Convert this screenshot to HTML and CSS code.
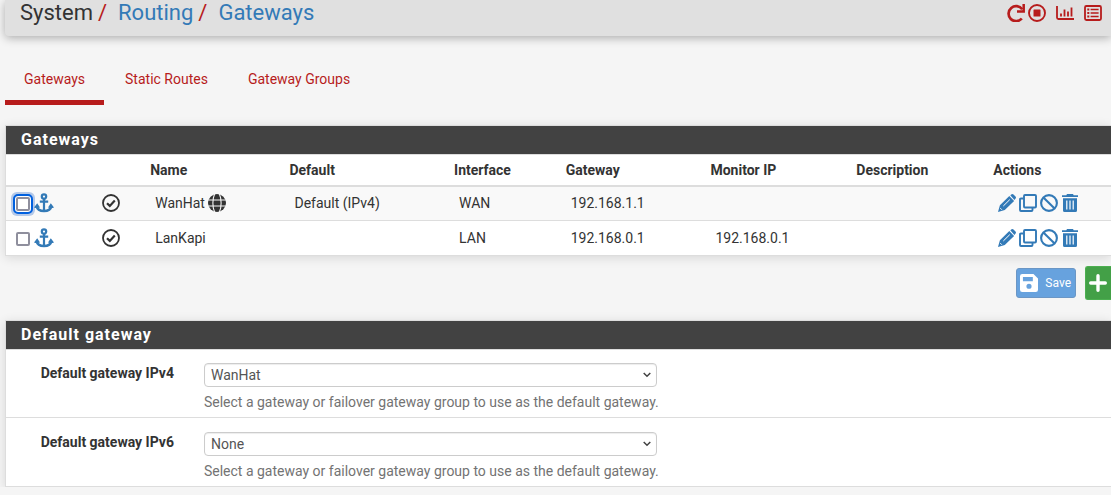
FILE: index.html
```html
<!DOCTYPE html>
<html lang="en">
<head>
<meta charset="utf-8">
<title>System / Routing / Gateways</title>
<link rel="stylesheet" href="styles.css">
</head>
<body>
<svg class="sprite" aria-hidden="true">
  <symbol id="anchor" viewBox="0 0 20 20"><g fill="none" stroke="currentColor" stroke-width="2.2"><circle cx="10" cy="3.6" r="2.2"/><path d="M10 6v12M5.8 8.6h8.4"/><path d="M2.6 13c.6 3.4 3.6 5 7.4 5s6.800-1.600 7.400-5" stroke-width="2.500"/></g><path fill="currentColor" d="M0 14.400 3.200 10.200 6 14.400 3.800 15 1.500 14.900zM20 14.400l-3.200-4.200-2.800 4.200 2.200.6 2.300-.1z"/></symbol>
  <symbol id="check" viewBox="0 0 18 18"><g fill="none" stroke="currentColor"><circle cx="9" cy="9" r="8" stroke-width="1.800"/><path d="m5 9.200 2.800 2.700 5-5.400" stroke-width="2.200"/></g></symbol>
  <symbol id="globe" viewBox="0 0 18 18"><circle cx="9" cy="9" r="9" fill="currentColor"/><g fill="none" stroke="#f9f9f9" stroke-width="1.100"><path d="M0 6h18M0 12h18M6.600 0C4.300 5 4.300 13 6.600 18M11.400 0c2.300 5 2.300 13 0 18"/></g></symbol>
  <symbol id="pencil" viewBox="0 0 18 18"><path fill="currentColor" d="M12.300 1.200 13.600.3q1-.6 1.900.2l2 2q.9.9.1 2l-1.200 1.500zM11.300 2.100l4.800 4.800-9.300 9.200L0 18l1.900-6.700z"/><path d="m5.300 12 6.500-6.400M2.300 14.200l1.500 1.500" fill="none" stroke="#fff" stroke-width="1"/></symbol>
  <symbol id="copy" viewBox="0 0 18 18"><g fill="none" stroke="currentColor" stroke-width="1.900"><rect x="5" y="1" width="12" height="12.500" rx="1"/><path d="M4.500 4.500H2q-1 0-1 1V16q0 1 1 1h10.500q1 0 1-1v-2"/></g></symbol>
  <symbol id="ban" viewBox="0 0 18 18"><g fill="none" stroke="currentColor" stroke-width="2.100"><circle cx="9" cy="9" r="7.900"/><path d="m3.400 3.400 11.200 11.200"/></g></symbol>
  <symbol id="trash" viewBox="0 0 16 18"><path fill="currentColor" d="M5 0h6l.7 1.200H16v1.900H0V1.200h4.300zM1 4.200h14V16.500Q15 18 13.500 18h-11Q1 18 1 16.500z"/><path d="M4.800 6.400v9.200M8 6.400v9.200M11.200 6.400v9.200" stroke="#fff" stroke-width="1.200"/></symbol>
  <symbol id="redo" viewBox="0 0 18 18"><path d="M15.200 5.300A7.500 7.500 0 1 0 14.800 14.500" fill="none" stroke="currentColor" stroke-width="2.700"/><path d="M16.700 0v7.400H10" fill="none" stroke="currentColor" stroke-width="2.500"/></symbol>
  <symbol id="stop" viewBox="0 0 18 18"><circle cx="9" cy="9" r="8" fill="none" stroke="currentColor" stroke-width="1.900"/><rect x="5.500" y="5.500" width="7" height="7" rx=".6" fill="currentColor"/></symbol>
  <symbol id="chart" viewBox="0 0 18 14"><path d="M1 0v11.500Q1 13 2.500 13H18M5 10.500V7.500M8.500 10.500v-7M12 10.500v-5M15.500 10.500v-9" fill="none" stroke="currentColor" stroke-width="1.800"/></symbol>
  <symbol id="list" viewBox="0 0 18 16"><g fill="none" stroke="currentColor"><rect x="1" y="1" width="16" height="14" rx="1.400" stroke-width="1.800"/><path d="M3.300 4.500h2M3.300 8h2M3.300 11.500h2" stroke-width="2"/><path d="M6.600 4.500h8M6.600 8h8M6.600 11.500h8" stroke-width="1.500"/></g></symbol>
  <symbol id="save" viewBox="0 0 16 16"><path fill="currentColor" fill-rule="evenodd" d="M2 0h10l4 4v10q0 2-2 2H2q-2 0-2-2V2q0-2 2-2zm.6 2.600v3.800h8.800V2.600zM8 8.600a2.300 2.300 0 1 0 0 4.600 2.300 2.300 0 0 0 0-4.600z"/></symbol>
  <symbol id="plus" viewBox="0 0 16 16"><path d="M8 1.500v13M1.500 8h13" stroke="currentColor" stroke-width="3" stroke-linecap="round"/></symbol>
</svg>

<header class="page-header">
  <nav class="breadcrumb" aria-label="Breadcrumb"><span>System</span><span class="slash">/</span><a href="#routing">Routing</a><span class="slash">/</span><a href="#gateways">Gateways</a></nav>
  <div class="header-tools">
    <a href="#restart" aria-label="Restart service"><svg class="icon"><use href="#redo"/></svg></a>
    <a href="#stop-service" aria-label="Stop service"><svg class="icon"><use href="#stop"/></svg></a>
    <a class="spaced" href="#status" aria-label="Status"><svg class="icon"><use href="#chart"/></svg></a>
    <a class="spaced" href="#log" aria-label="Log"><svg class="icon"><use href="#list"/></svg></a>
  </div>
</header>

<main class="content">
  <nav class="tabs">
    <a class="tab active" href="#gateways" aria-current="page">Gateways</a>
    <a class="tab" href="#static-routes">Static Routes</a>
    <a class="tab" href="#groups">Gateway Groups</a>
  </nav>

  <section class="panel">
    <h2 class="panel-title">Gateways</h2>
    <table class="gateways">
      <colgroup><col class="c-select"><col class="c-state"><col class="c-name"><col class="c-default"><col class="c-interface"><col class="c-gateway"><col class="c-monitor"><col class="c-description"><col></colgroup>
      <thead>
        <tr><th></th><th></th><th>Name</th><th>Default</th><th>Interface</th><th>Gateway</th><th>Monitor IP</th><th>Description</th><th>Actions</th></tr>
      </thead>
      <tbody>
        <tr>
          <td><div class="icons select"><input class="tick focused" type="checkbox" aria-label="Select WanHat"><a href="#move" aria-label="Move WanHat"><svg class="icon anchor"><use href="#anchor"/></svg></a></div></td>
          <td><svg class="icon"><use href="#check"/></svg></td>
          <td><div class="name">WanHat <svg class="icon"><use href="#globe"/></svg></div></td>
          <td>Default (IPv4)</td><td>WAN</td><td>192.168.1.1</td><td></td><td></td>
          <td><div class="icons"><a href="#edit" aria-label="Edit"><svg class="icon"><use href="#pencil"/></svg></a><a href="#copy-row" aria-label="Copy"><svg class="icon"><use href="#copy"/></svg></a><a href="#disable" aria-label="Disable"><svg class="icon"><use href="#ban"/></svg></a><a href="#delete" aria-label="Delete"><svg class="icon"><use href="#trash"/></svg></a></div></td>
        </tr>
        <tr>
          <td><div class="icons select"><input class="tick" type="checkbox" aria-label="Select LanKapi"><a href="#move" aria-label="Move LanKapi"><svg class="icon anchor"><use href="#anchor"/></svg></a></div></td>
          <td><svg class="icon"><use href="#check"/></svg></td>
          <td>LanKapi</td><td></td><td>LAN</td><td>192.168.0.1</td><td>192.168.0.1</td><td></td>
          <td><div class="icons"><a href="#edit" aria-label="Edit"><svg class="icon"><use href="#pencil"/></svg></a><a href="#copy-row" aria-label="Copy"><svg class="icon"><use href="#copy"/></svg></a><a href="#disable" aria-label="Disable"><svg class="icon"><use href="#ban"/></svg></a><a href="#delete" aria-label="Delete"><svg class="icon"><use href="#trash"/></svg></a></div></td>
        </tr>
      </tbody>
    </table>
  </section>

  <div class="buttons">
    <button class="btn save" type="button"><svg class="icon"><use href="#save"/></svg>Save</button>
    <button class="btn add" type="button" aria-label="Add"><svg class="icon"><use href="#plus"/></svg></button>
  </div>

  <section class="panel">
    <h2 class="panel-title">Default gateway</h2>
    <div class="field">
      <label for="gw4">Default gateway IPv4</label>
      <div><select id="gw4"><option>WanHat</option><option>LanKapi</option></select><p class="help">Select a gateway or failover gateway group to use as the default gateway.</p></div>
    </div>
    <div class="field">
      <label for="gw6">Default gateway IPv6</label>
      <div><select id="gw6"><option>None</option></select><p class="help">Select a gateway or failover gateway group to use as the default gateway.</p></div>
    </div>
  </section>
</main>
</body>
</html>
```
FILE: styles.css
```css
* { box-sizing: border-box; }
body {
  margin: 0;
  background: #f5f5f5;
  color: #333;
  font: 14px/20px Roboto, sans-serif;
  overflow-x: hidden;
}
a { color: #337ab7; text-decoration: none; }
.sprite { display: none; }
.icon { display: block; width: 18px; height: 18px; }

.page-header {
  display: flex;
  justify-content: space-between;
  align-items: flex-start;
  margin-left: 5px;
  padding: 0 9px 10px 15px;
  border-radius: 0 0 0 4px;
  background: #e0e0e0;
  box-shadow: 0 2px 10px rgba(0, 0, 0, .3);
}
.breadcrumb { display: flex; font-size: 22px; line-height: 26px; }
.slash { margin: 0 11px 0 5px; color: #b71c1c; }
.header-tools { display: flex; gap: 3px; padding-top: 4px; }
.header-tools a { color: #b71c1c; }
.header-tools .spaced { margin-left: 7px; }

.content { padding-left: 5px; }
.tabs { display: flex; gap: 2px; padding-top: 24px; }
.tab {
  padding: 9px 19px 11px;
  border-bottom: 5px solid transparent;
  color: #b71c1c;
}
.tab.active { border-color: #b71c1c; }

.panel {
  border: 1px solid #ddd;
  border-right: 0;
  background: #fff;
  box-shadow: 0 2px 10px rgba(0, 0, 0, .12);
}
.tabs + .panel { margin-top: 20px; }
.panel-title {
  margin: 0;
  padding: 4px 15px;
  border-bottom: 1px solid #ddd;
  background: #424242;
  color: #fff;
  font-size: 16px;
  line-height: 20px;
  letter-spacing: 1px;
}

.gateways { width: 100%; table-layout: fixed; border-collapse: collapse; }
.c-select { width: 7.8%; }
.c-state { width: 4.8%; }
.c-name { width: 12.6%; }
.c-default { width: 14.9%; }
.c-interface { width: 10.1%; }
.c-gateway { width: 13.1%; }
.c-monitor { width: 13.2%; }
.c-description { width: 12.4%; }
.gateways th { padding: 5px; text-align: left; border-bottom: 2px solid #ddd; }
.gateways td { height: 34px; padding: 0 10px; border-bottom: 1px solid #ddd; }
.gateways tbody tr:first-child { background: #f9f9f9; }
.gateways tbody tr:last-child td { height: 35px; border-bottom: 0; }
.icons { display: flex; align-items: center; gap: 3px; }
.icons.select { gap: 4px; }
.name { display: flex; align-items: center; gap: 3px; }
.tick {
  appearance: none;
  width: 14px;
  height: 14px;
  margin: 2px 0 0;
  border: 2px solid #8f8f9d;
  border-radius: 2px;
  background: #fff;
}
.tick.focused {
  outline: 2px solid #0060df;
  outline-offset: 1px;
  box-shadow: 0 0 0 1px #fff, 0 0 0 5px #b5c9e8;
}
.icon.anchor { width: 20px; height: 20px; }

.buttons {
  display: flex;
  justify-content: flex-end;
  align-items: center;
  gap: 9px;
  padding: 10px 0 20px;
}
.btn {
  display: flex;
  align-items: center;
  border: 1px solid;
  border-radius: 3px;
  color: #fff;
  font: 12px/18px Roboto, sans-serif;
}
.save { gap: 7px; padding: 5px 4px 5px 3px; border-color: #6b96c5; background: #67a2de; }
.add { padding: 7px 4px 7px 3px; border-color: #4caf50; border-width: 1px 0 1px 1px; border-radius: 3px 0 0 3px; background: #43a047; }

.field {
  display: grid;
  grid-template-columns: 15.2% 41%;
  column-gap: 30px;
  padding: 14px 0 5px;
}
.panel-title + .field { padding-top: 13px; }
.field + .field { border-top: 1px solid #ddd; }
.field label { text-align: right; font-weight: 700; }
.field select {
  display: block;
  appearance: none;
  width: 100%;
  height: 24px;
  padding: 0 6px;
  border: 1px solid #ccc;
  border-radius: 4px;
  background: #fff url("data:image/svg+xml,%3Csvg xmlns='http://www.w3.org/2000/svg' width='8' height='6'%3E%3Cpath d='M.7 1 4 4.300 7.300 1' fill='none' stroke='%23444' stroke-width='1.500'/%3E%3C/svg%3E") no-repeat right 5px center;
  box-shadow: inset 0 1px 1px rgba(0, 0, 0, .075);
  color: #555;
  font: 14px/20px Roboto, sans-serif;
}
.help { margin: 5px 0 0; color: #737373; white-space: nowrap; }
```
